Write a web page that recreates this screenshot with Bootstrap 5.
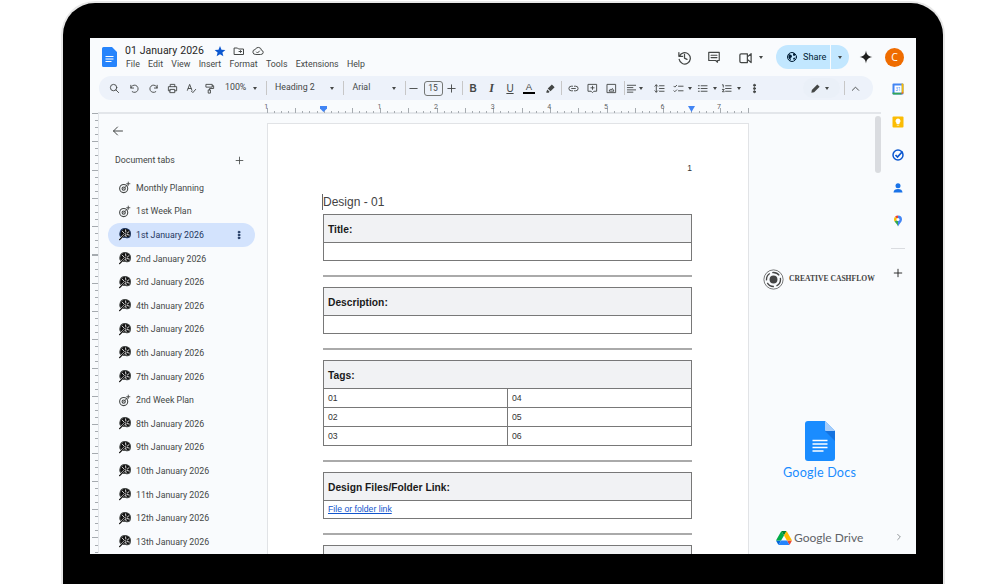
<!DOCTYPE html>
<html lang="en">
<head>
<meta charset="utf-8">
<title>01 January 2026</title>
<link href="https://cdn.jsdelivr.net/npm/bootstrap@5.3.0/dist/css/bootstrap.min.css" rel="stylesheet">
<style>
html,body{height:584px;overflow:hidden;background:#fff;font-family:Roboto,sans-serif;color:#444746}
.frame{width:884px;height:600px;margin:1px 0 0 61px;background:#000;border:2px solid #e8e8e8;border-bottom:0;border-radius:34px 34px 0 0;padding:35px 0 0 27px}
.screen{width:826px;height:516px;background:#f9fbfd;overflow:hidden}
.topbar{height:38px}
.docmark{margin:0 8px 0 12px;width:15px;height:20px;flex:none}
.titleblock{align-self:flex-start}
.doctitle{font-size:10.5px;line-height:14px;color:#1f1f1f;word-spacing:.4px;margin-right:10px}
.titlerow{height:14px;margin-top:6px}
.menus{font-size:8.8px;line-height:13px;gap:8.3px;color:#444746;margin-left:1px}
.ico{width:12px;height:12px;flex:none;fill:none;stroke:currentColor;stroke-width:2;stroke-linecap:round;stroke-linejoin:round}
.solid{fill:currentColor;stroke:none}
.titleicons{gap:7px}
.star{color:#0b57d0}
.hist{width:15px;height:15px;margin-right:15px}
.cmt{width:14px;height:14px;margin-right:17px}
.vid{width:15px;height:15px}
.caret{width:0;height:0;border:2.5px solid transparent;border-top:3px solid #444746;border-bottom:0;flex:none}
.vcaret{margin:0 13px 0 6px}
.sharebtn{width:73px;height:24px;background:#c2e7ff;border-radius:12px;color:#001d35;font-size:9.2px}
.sharemain{width:54px;padding-left:10px;gap:5px;height:100%}
.sharediv{width:1px;height:100%;background:#f9fbfd}
.sharecaret{flex:1;height:100%}
.spark{width:14px;height:14px;margin:0 12px 0 10px;color:#1f1f1f}
.avatar{width:19px;height:19px;border-radius:50%;background:#ef6c00;color:#fff;font-size:10.5px;font-weight:500;line-height:19px;text-align:center;font-family:"Open Sans",sans-serif}
.rightactions{margin-right:12px}
.lower{height:478px}
.leftcol{width:791px;flex:none}
.toolbar{width:774px;height:24px;margin-left:9px;background:#edf2fa;border-radius:12px;font-size:8.8px;color:#444746;padding-left:5px}
.tb{width:19px;height:24px;flex:none}
.tb21{width:21px}
.tb20{width:20px}
.tb18{width:18px}
.tb14{width:14px}
.tb .ico{width:11px;height:11px}
.sep{width:1px;height:14px;background:#c7c7c7;flex:none}
.g1{margin-left:1px}.g15{margin-left:1.5px}.g2{margin-left:2px}.g3{margin-left:3px}.g4{margin-left:4px}.g65{margin-left:6.5px}.g85{margin-left:8.5px}.g95{margin-left:9.5px}.g385{margin-left:38.5px}
.zoomtxt{width:30px;padding-left:7px;flex:none}
.styletxt{width:62.5px;flex:none;padding-left:8px}
.fonttxt{width:48px;flex:none;padding-left:8.5px}
.sizebox{width:19px;height:15px;border:1px solid #747775;border-radius:3px;font-size:8.5px;line-height:13px;text-align:center;flex:none}
.ltr{font-family:"Liberation Sans",sans-serif;font-size:10px}
.ltr-b{font-weight:700}
.ltr-i{font-family:"Liberation Serif",serif;font-style:italic;font-weight:700;font-size:12px}
.ltr-u{text-decoration:underline}
.colorA{flex-direction:column;line-height:9px;font-size:9.5px}
.colorA i{display:block;width:12px;height:2px;background:#000;margin-top:1px}
.editpill{width:37px;height:20px;border-radius:10px;gap:4.5px;padding-left:7px;background:#eaf0f8;flex:none}
.editpill .ico{width:11px;height:11px}
.rulerh{height:13px;position:relative;font-size:7px;line-height:8px;color:#5f6368}
.rulerstrip{position:absolute;left:177px;top:0;width:482px;height:13px;padding-top:3px;background:repeating-linear-gradient(90deg,#a6abb0 0 1px,transparent 1px 28.3px) 0 bottom/100% 5px no-repeat,repeating-linear-gradient(90deg,#a6abb0 0 1px,transparent 1px 7.075px) 0 bottom/100% 2px no-repeat}
.rulernum{width:56.6px;flex:none;text-align:center}
.r0{margin-left:-29px}
.r1{margin-left:56.6px}
.marker{position:absolute;top:6px;width:7px;height:6px;background:#4285f4;clip-path:polygon(0 0,100% 0,100% 40%,50% 100%,0 40%)}
.m1{left:230px}
.m2{left:598px;clip-path:polygon(0 0,100% 0,50% 100%)}
.workspace{height:441px}
.rulerv{width:8px;flex:none;height:100%;background:repeating-linear-gradient(180deg,#a6abb0 0 1px,transparent 1px 28.3px) right top/6px 100% no-repeat,repeating-linear-gradient(180deg,#a6abb0 0 1px,transparent 1px 7.075px) right top/3px 100% no-repeat}
.mainarea{border-top:2px solid #e3e6ea;border-left:1px solid #e3e6ea;height:100%;flex:1;min-width:0;margin-top:-1px}
.sidebar{width:168px;flex:none;color:#444746}
.backrow{height:32px;padding:1px 0 0 13px}
.backrow .ico{width:12px;height:12px}
.tabshead{height:30px;padding:0 0 0 16px;font-size:8.8px;color:#444746}
.tabshead .ico{width:9px;height:9px;margin-left:auto;margin-right:23px;margin-top:-2px}
.tabitem{height:23.6px;margin:0 12px 0 9px;padding:0 7px 0 10px;gap:5px;border-radius:12px;font-size:8.8px;line-height:12px}
.tabitem .ico{width:13px;height:13px}
.tabitem.sel{background:#d3e3fd;color:#1f3760}
.tabitem .dots{margin-left:auto;width:10px;height:10px;margin-right:4px}
.tabname{white-space:nowrap}
.docpage{width:482px;flex:none;margin-top:9px;height:600px;background:#fff;border:1px solid #e1e3e6;border-bottom:0;padding:39px 56px 0 55px;font-family:"Liberation Sans",sans-serif;color:#000}
.pagenum{text-align:right;font-size:8.5px;line-height:10px;color:#333;height:10px}
.heading{font-size:12px;line-height:16px;color:#434343;margin:21px 0 4px 0;height:16px;box-shadow:-1px 0 0 #666}
.doc-table{width:369px;margin:0;border-color:#787878;font-size:8.7px;table-layout:fixed;--bs-table-bg:transparent}
.doc-table td{border:1px solid #787878;padding:0 4px;vertical-align:middle;color:#333;line-height:11px}
.doc-table .head{background:#f1f2f4;height:28px;padding-top:1px;font-weight:700;font-size:10.25px;color:#1a1a1a}
.doc-table .cell{height:18px}
.doc-table .wide{height:19px}
.docrule{border:0;border-top:2px solid #aaa;opacity:1;margin:14px 0 10px;width:369px}
.doclink{color:#1155cc;text-decoration:underline}
.rightzone{width:124px;flex:none;height:100%;padding-left:14px}
.brandline{margin-top:154px;height:22px;gap:5px;font-family:"Liberation Serif",serif;font-weight:700;font-size:7.6px;color:#444;white-space:nowrap}
.brandline svg{width:21px;height:21px;flex:none}
.gdocs{margin-top:131px;margin-left:20px;width:73px}
.gdocs svg{width:30px;height:40px}
.gdocs div{font-family:Lato,sans-serif;font-size:12.6px;line-height:18px;color:#1a8cff;margin-top:3px;white-space:nowrap;letter-spacing:.2px}
.gdrive{margin-top:47px;margin-left:13px;gap:2px;font-family:Lato,sans-serif;font-size:12px;color:#5f6368;white-space:nowrap;height:18px}
.gdrive svg{width:16px;height:14px;flex:none}
.scrollgut{width:8px;flex:none;padding:2px 0 0 2px}
.thumb{width:6px;height:57px;background:#dadce0;border-radius:3px}
.sidepanel{width:35px;flex:none;padding-right:1px;margin-top:-4px}
.sp{height:33.2px;width:100%;flex:none}
.sp svg{width:12px;height:12px}
.sprule{width:14px;height:1px;background:#dadce0;margin:10px auto 0}
.spplus{margin-top:14px;height:20px}
.spplus svg{width:10px;height:10px;color:#1f1f1f}
.spnext{height:34px;margin-top:auto}
.spnext svg{width:8px;height:8px;color:#5f6368;margin-left:1px}
</style>
</head>
<body>
<svg width="0" height="0" class="position-absolute">
<defs>
<symbol id="i-target" viewBox="0 0 24 24"><circle cx="10.5" cy="14" r="7.5" fill="none" stroke="currentColor" stroke-width="2"/><circle cx="10.5" cy="14" r="3" fill="none" stroke="currentColor" stroke-width="2"/><path d="M10.5 14l7-7M19 2v6M16 5h6" fill="none" stroke="currentColor" stroke-width="1.6"/></symbol>
<symbol id="i-palette" viewBox="0 0 24 24"><path d="M13 1c6 0 10 4 10 9s-3 8-6 8c-2 0-2.500-1-4-1-3 0-3 1-5 .5C4.500 16.500 3 13.500 3.500 10 4.200 5 8 1 13 1z" fill="#111"/><path d="M8 6l3 3M14 3.500l.5 4M20 7l-3 2.500M20.500 13l-4-1M15 16l-1-3" stroke="#fff" stroke-width="1.600"/><path d="M13 11L4 20" stroke="#fff" stroke-width="3.500"/><path d="M13 11L3 21.500" stroke="#111" stroke-width="2.400" stroke-linecap="round"/></symbol>
<symbol id="i-plus" viewBox="0 0 24 24"><path d="M12 3v18M3 12h18" fill="none" stroke="currentColor" stroke-width="2.2"/></symbol>
<symbol id="i-dots" viewBox="0 0 24 24"><circle cx="12" cy="5" r="2.2" fill="currentColor"/><circle cx="12" cy="12" r="2.2" fill="currentColor"/><circle cx="12" cy="19" r="2.2" fill="currentColor"/></symbol>
</defs>
</svg>
<div class="frame">
 <div class="screen">
  <div class="topbar d-flex align-items-center">
   <svg class="docmark" viewBox="0 0 15 20"><path d="M1.500 0H10l5 5v13.500a1.500 1.500 0 0 1-1.500 1.500h-12A1.500 1.500 0 0 1 0 18.500v-17A1.500 1.500 0 0 1 1.500 0z" fill="#2684fc"/><path d="M3.500 9.500h8M3.500 12h8M3.500 14.500h6" stroke="#fff" stroke-width="1.100"/></svg>
   <div class="titleblock">
    <div class="titlerow d-flex align-items-center">
     <span class="doctitle">01 January 2026</span>
     <div class="titleicons d-flex align-items-center">
      <svg class="ico solid star" viewBox="0 0 24 24"><path d="M12 2l3 7.300 7.800.6-6 5 1.900 7.600L12 18.400l-6.700 4.100 1.900-7.600-6-5L9 9.300z"/></svg>
      <svg class="ico" viewBox="0 0 24 24"><path d="M3 6h6l2 2h10v11H3zM12 13h5M15 11l2 2-2 2"/></svg>
      <svg class="ico" viewBox="0 0 24 24"><path d="M7 19a5 5 0 0 1-.5-10A6.500 6.500 0 0 1 19 10.500 4.300 4.300 0 0 1 18 19zM9 14l2 2 4-4"/></svg>
     </div>
    </div>
    <div class="menus d-flex"><span>File</span><span>Edit</span><span>View</span><span>Insert</span><span>Format</span><span>Tools</span><span>Extensions</span><span>Help</span></div>
   </div>
   <div class="ms-auto d-flex align-items-center rightactions">
    <svg class="ico hist" viewBox="0 0 24 24"><path d="M3 4v6h6M4 10a9 9 0 1 1-.5 5M12 7v6l4 2"/></svg>
    <svg class="ico cmt" viewBox="0 0 24 24"><path d="M3 4h18v14h-3v3l-3-3H3zM7 9h10M7 13h10"/></svg>
    <svg class="ico vid" viewBox="0 0 24 24"><path d="M3 8a2 2 0 0 1 2-2h10v14H5a2 2 0 0 1-2-2zM15 11l6-5v14l-6-5"/></svg>
    <span class="caret vcaret"></span>
    <div class="sharebtn d-flex align-items-center">
     <div class="sharemain d-flex align-items-center"><svg class="ico" viewBox="0 0 24 24"><circle cx="12" cy="12" r="9"/><path d="M5 6l6 2 1 4-3 2 1 6-5-6zM14 4l5 3-2 3-3-1zM14 14l5-1-3 6z" fill="currentColor" stroke="none"/></svg><span>Share</span></div>
     <span class="sharediv"></span>
     <div class="sharecaret d-flex align-items-center justify-content-center"><span class="caret"></span></div>
    </div>
    <svg class="ico solid spark" viewBox="0 0 24 24"><path d="M12 1c1 7 4 10 11 11-7 1-10 4-11 11-1-7-4-10-11-11 7-1 10-4 11-11z"/></svg>
    <div class="avatar">C</div>
   </div>
  </div>
  <div class="lower d-flex">
   <div class="leftcol">
    <div class="toolbar d-flex align-items-center">
     <div class="tb tb21 d-flex align-items-center justify-content-center"><svg class="ico" viewBox="0 0 24 24"><circle cx="10" cy="10" r="7"/><path d="M15 15l6 6"/></svg></div>
     <div class="tb d-flex align-items-center justify-content-center"><svg class="ico" viewBox="0 0 24 24"><path d="M4 5v6h6M4 11a8 8 0 1 1 3 8"/></svg></div>
     <div class="tb d-flex align-items-center justify-content-center"><svg class="ico" viewBox="0 0 24 24"><path d="M20 5v6h-6M20 11a8 8 0 1 0-3 8"/></svg></div>
     <div class="tb d-flex align-items-center justify-content-center"><svg class="ico" viewBox="0 0 24 24"><path d="M7 8V3h10v5M7 17H3V8h18v9h-4M7 14h10v7H7z"/></svg></div>
     <div class="tb tb18 d-flex align-items-center justify-content-center"><svg class="ico" viewBox="0 0 24 24"><path d="M3 16L8 3l5 13M5 12h6M12 18l3 3 6-7"/></svg></div>
     <div class="tb tb18 d-flex align-items-center justify-content-center"><svg class="ico" viewBox="0 0 24 24"><path d="M5 3h13v6H5zM18 6h3v6h-9v3M10 15h4v7h-4z"/></svg></div>
     <span class="zoomtxt">100%</span><div class="tb tb14 d-flex align-items-center justify-content-center"><span class="caret"></span></div>
     <span class="sep g4"></span>
     <span class="styletxt">Heading 2</span><span class="caret"></span><span class="sep g95"></span>
     <span class="fonttxt">Arial</span><span class="caret"></span><span class="sep g85"></span>
     <div class="tb tb14 g1 d-flex align-items-center justify-content-center"><svg class="ico" viewBox="0 0 24 24"><path d="M4 12h16"/></svg></div>
     <span class="sizebox g3">15</span>
     <div class="tb tb14 g2 d-flex align-items-center justify-content-center"><svg class="ico" viewBox="0 0 24 24"><path d="M4 12h16M12 4v16"/></svg></div>
     <span class="sep g3"></span>
     <div class="tb g1 d-flex align-items-center justify-content-center ltr ltr-b">B</div>
     <div class="tb tb18 d-flex align-items-center justify-content-center ltr ltr-i">I</div>
     <div class="tb d-flex align-items-center justify-content-center ltr ltr-u">U</div>
     <div class="tb d-flex align-items-center justify-content-center ltr colorA"><span>A</span><i></i></div>
     <div class="tb tb20 g15 d-flex align-items-center justify-content-center"><svg class="ico solid" viewBox="0 0 24 24"><path d="M15 3l6 6-9 9-6-6zM5 14l5 5-2 2H3v-2z"/></svg></div>
     <span class="sep g1"></span>
     <div class="tb g15 d-flex align-items-center justify-content-center"><svg class="ico" viewBox="0 0 24 24"><path d="M10 7H7a5 5 0 0 0 0 10h3M14 7h3a5 5 0 0 1 0 10h-3M8 12h8"/></svg></div>
     <div class="tb d-flex align-items-center justify-content-center"><svg class="ico" viewBox="0 0 24 24"><path d="M3 3h18v15h-6l-3 3-3-3H3zM12 7v7M8.500 10.500h7"/></svg></div>
     <div class="tb d-flex align-items-center justify-content-center"><svg class="ico" viewBox="0 0 24 24"><path d="M3 3h18v18H3zM7 17l3-4 2 2 2-3 3 5z"/></svg></div>
     <span class="sep g3"></span>
     <div class="tb tb14 d-flex align-items-center justify-content-center"><svg class="ico" viewBox="0 0 24 24"><path d="M3 5h18M3 10h12M3 15h18M3 20h12"/></svg></div><span class="caret"></span>
     <div class="tb tb20 g65 d-flex align-items-center justify-content-center"><svg class="ico" viewBox="0 0 24 24"><path d="M5 4v16M2 7l3-3 3 3M2 17l3 3 3-3M12 6h10M12 12h10M12 18h10"/></svg></div>
     <div class="tb d-flex align-items-center justify-content-center"><svg class="ico" viewBox="0 0 24 24"><path d="M2 7l2 2 4-4M2 17l2 2 4-4M12 7h10M12 17h10"/></svg></div><span class="caret"></span>
     <div class="tb g1 d-flex align-items-center justify-content-center"><svg class="ico" viewBox="0 0 24 24"><path d="M9 6h13M9 12h13M9 18h13M3 6h2M3 12h2M3 18h2"/></svg></div><span class="caret g1"></span>
     <div class="tb d-flex align-items-center justify-content-center"><svg class="ico" viewBox="0 0 24 24"><path d="M10 6h12M10 12h12M10 18h12M3 4h2v5M3 14h4l-4 5h4"/></svg></div><span class="caret g1"></span>
     <div class="tb g4 d-flex align-items-center justify-content-center"><svg class="ico" viewBox="0 0 24 24"><use href="#i-dots"/></svg></div>
     <div class="editpill g385 d-flex align-items-center"><svg class="ico solid" viewBox="0 0 24 24"><path d="M3 21l1-6L16 3l5 5L9 20z"/></svg><span class="caret"></span></div>
     <span class="sep g4"></span>
     <div class="tb g15 d-flex align-items-center justify-content-center"><svg class="ico" viewBox="0 0 24 24"><path d="M5 16l7-7 7 7"/></svg></div>
    </div>
    <div class="rulerh">
     <div class="rulerstrip d-flex"><span class="rulernum r0">1</span><span class="rulernum r1">1</span><span class="rulernum">2</span><span class="rulernum">3</span><span class="rulernum">4</span><span class="rulernum">5</span><span class="rulernum">6</span><span class="rulernum">7</span></div>
     <span class="marker m1"></span><span class="marker m2"></span>
    </div>
    <div class="workspace d-flex">
     <div class="rulerv"></div>
     <div class="mainarea d-flex">
      <aside class="sidebar">
       <div class="backrow d-flex align-items-center"><svg class="ico" viewBox="0 0 24 24"><path d="M21 12H3M11 4l-8 8 8 8"/></svg></div>
       <div class="tabshead d-flex align-items-center"><span>Document tabs</span><svg class="ico" viewBox="0 0 24 24"><use href="#i-plus"/></svg></div>
       <div class="tabitem d-flex align-items-center"><svg class="ico" viewBox="0 0 24 24"><use href="#i-target"/></svg><span class="tabname">Monthly Planning</span></div>
       <div class="tabitem d-flex align-items-center"><svg class="ico" viewBox="0 0 24 24"><use href="#i-target"/></svg><span class="tabname">1st Week Plan</span></div>
       <div class="tabitem sel d-flex align-items-center"><svg class="ico" viewBox="0 0 24 24"><use href="#i-palette"/></svg><span class="tabname">1st January 2026</span><svg class="ico dots" viewBox="0 0 24 24"><use href="#i-dots"/></svg></div>
       <div class="tabitem d-flex align-items-center"><svg class="ico" viewBox="0 0 24 24"><use href="#i-palette"/></svg><span class="tabname">2nd January 2026</span></div>
       <div class="tabitem d-flex align-items-center"><svg class="ico" viewBox="0 0 24 24"><use href="#i-palette"/></svg><span class="tabname">3rd January 2026</span></div>
       <div class="tabitem d-flex align-items-center"><svg class="ico" viewBox="0 0 24 24"><use href="#i-palette"/></svg><span class="tabname">4th January 2026</span></div>
       <div class="tabitem d-flex align-items-center"><svg class="ico" viewBox="0 0 24 24"><use href="#i-palette"/></svg><span class="tabname">5th January 2026</span></div>
       <div class="tabitem d-flex align-items-center"><svg class="ico" viewBox="0 0 24 24"><use href="#i-palette"/></svg><span class="tabname">6th January 2026</span></div>
       <div class="tabitem d-flex align-items-center"><svg class="ico" viewBox="0 0 24 24"><use href="#i-palette"/></svg><span class="tabname">7th January 2026</span></div>
       <div class="tabitem d-flex align-items-center"><svg class="ico" viewBox="0 0 24 24"><use href="#i-target"/></svg><span class="tabname">2nd Week Plan</span></div>
       <div class="tabitem d-flex align-items-center"><svg class="ico" viewBox="0 0 24 24"><use href="#i-palette"/></svg><span class="tabname">8th January 2026</span></div>
       <div class="tabitem d-flex align-items-center"><svg class="ico" viewBox="0 0 24 24"><use href="#i-palette"/></svg><span class="tabname">9th January 2026</span></div>
       <div class="tabitem d-flex align-items-center"><svg class="ico" viewBox="0 0 24 24"><use href="#i-palette"/></svg><span class="tabname">10th January 2026</span></div>
       <div class="tabitem d-flex align-items-center"><svg class="ico" viewBox="0 0 24 24"><use href="#i-palette"/></svg><span class="tabname">11th January 2026</span></div>
       <div class="tabitem d-flex align-items-center"><svg class="ico" viewBox="0 0 24 24"><use href="#i-palette"/></svg><span class="tabname">12th January 2026</span></div>
       <div class="tabitem d-flex align-items-center"><svg class="ico" viewBox="0 0 24 24"><use href="#i-palette"/></svg><span class="tabname">13th January 2026</span></div>
      </aside>
      <main class="docpage">
       <div class="pagenum">1</div>
       <div class="heading">Design - 01</div>
       <table class="table doc-table"><tbody><tr><td class="head">Title:</td></tr><tr><td class="cell"></td></tr></tbody></table>
       <hr class="docrule">
       <table class="table doc-table"><tbody><tr><td class="head">Description:</td></tr><tr><td class="cell"></td></tr></tbody></table>
       <hr class="docrule">
       <table class="table doc-table"><tbody><tr><td class="head" colspan="2">Tags:</td></tr><tr><td class="wide">01</td><td class="wide">04</td></tr><tr><td class="wide">02</td><td class="wide">05</td></tr><tr><td class="wide">03</td><td class="wide">06</td></tr></tbody></table>
       <hr class="docrule">
       <table class="table doc-table"><tbody><tr><td class="head">Design Files/Folder Link:</td></tr><tr><td class="cell"><a class="doclink" href="#">File or folder link</a></td></tr></tbody></table>
       <hr class="docrule">
       <table class="table doc-table"><tbody><tr><td class="head"></td></tr></tbody></table>
      </main>
      <div class="rightzone">
       <div class="brandline d-flex align-items-center"><svg viewBox="0 0 24 24"><circle cx="12" cy="12" r="11" fill="none" stroke="#666" stroke-width="1"/><circle cx="12" cy="12" r="8" fill="none" stroke="#444" stroke-width="1.500" stroke-dasharray="9 3"/><circle cx="12" cy="12" r="4.500" fill="#444"/></svg><span>CREATIVE CASHFLOW</span></div>
       <div class="gdocs text-center"><svg viewBox="0 0 30 40"><path d="M3 0h17l10 10v27a3 3 0 0 1-3 3H3a3 3 0 0 1-3-3V3a3 3 0 0 1 3-3z" fill="#1a8cff"/><path d="M20 0l10 10H21a1 1 0 0 1-1-1z" fill="#a6cdfb"/><path d="M20 10l10 10V10z" fill="#1473e0"/><path d="M7.500 19.500h15M7.500 23h15M7.500 26.500h15M7.500 30h11" stroke="#fff" stroke-width="1.700"/></svg><div>Google Docs</div></div>
       <div class="gdrive d-flex align-items-center"><svg viewBox="0 0 87.300 78"><path d="m6.600 66.850 3.850 6.650c.8 1.400 1.950 2.500 3.300 3.300l13.750-23.800h-27.500c0 1.550.4 3.100 1.200 4.500z" fill="#0066da"/><path d="m43.650 25-13.750-23.800c-1.350.8-2.500 1.900-3.300 3.300l-25.400 44a9.060 9.060 0 0 0 -1.200 4.500h27.500z" fill="#00ac47"/><path d="m73.550 76.800c1.350-.8 2.500-1.900 3.300-3.300l1.600-2.750 7.650-13.250c.8-1.400 1.200-2.950 1.200-4.500h-27.502l5.852 11.500z" fill="#ea4335"/><path d="m43.650 25 13.750-23.800c-1.350-.8-2.900-1.200-4.500-1.200h-18.500c-1.600 0-3.150.45-4.500 1.200z" fill="#00832d"/><path d="m59.800 53h-32.300l-13.750 23.800c1.350.8 2.900 1.200 4.500 1.200h50.800c1.600 0 3.150-.45 4.500-1.200z" fill="#2684fc"/><path d="m73.400 26.500-12.700-22c-.8-1.400-1.950-2.500-3.300-3.300l-13.750 23.800 16.150 28h27.450c0-1.550-.4-3.100-1.200-4.500z" fill="#ffba00"/></svg><span>Google Drive</span></div>
      </div>
      <div class="scrollgut"><div class="thumb"></div></div>
     </div>
    </div>
   </div>
   <div class="sidepanel d-flex flex-column">
    <div class="sp d-flex align-items-center justify-content-center"><svg viewBox="0 0 24 24"><rect x="1" y="1" width="22" height="22" rx="2" fill="#4285f4"/><path d="M19 1h2a2 2 0 0 1 2 2v18h-4z" fill="#fbbc04"/><path d="M1 19h18v4H3a2 2 0 0 1-2-2z" fill="#34a853"/><path d="M19 19h4l-4 4z" fill="#ea4335"/><rect x="5" y="5" width="14" height="14" fill="#fff"/><text x="12" y="16" font-size="9" text-anchor="middle" fill="#4285f4">31</text></svg></div>
    <div class="sp d-flex align-items-center justify-content-center"><svg viewBox="0 0 24 24"><rect x="1" y="1" width="22" height="22" rx="2" fill="#fbbc04"/><path d="M12 5a5 5 0 0 0-3 9v2h6v-2a5 5 0 0 0-3-9zM9.500 17.500h5V19h-5z" fill="#fff"/></svg></div>
    <div class="sp d-flex align-items-center justify-content-center"><svg viewBox="0 0 24 24"><circle cx="12" cy="12" r="10" fill="none" stroke="#0b57d0" stroke-width="3"/><path d="M7 12l4 4 10-11" fill="none" stroke="#0b57d0" stroke-width="3.500"/></svg></div>
    <div class="sp d-flex align-items-center justify-content-center"><svg viewBox="0 0 24 24"><circle cx="12" cy="7.500" r="5" fill="#1a73e8"/><path d="M3 21c0-5 4-7 9-7s9 2 9 7z" fill="#1a73e8"/></svg></div>
    <div class="sp d-flex align-items-center justify-content-center"><svg viewBox="0 0 24 24"><path d="M12 1a8 8 0 0 1 8 8c0 5-5 8-8 14z" fill="#4285f4"/><path d="M12 1a8 8 0 0 0-6 2.700l6 6z" fill="#ea4335"/><path d="M6 3.700A8 8 0 0 0 4 9c0 1.500.4 2.700 1 3.800l7-3.100z" fill="#fbbc04"/><path d="M5 12.800C7 16 11 18 12 23V9.700z" fill="#34a853"/><circle cx="12" cy="9" r="3" fill="#fff"/></svg></div>
    <div class="sprule"></div>
    <div class="spplus d-flex align-items-center justify-content-center"><svg class="ico" viewBox="0 0 24 24"><use href="#i-plus"/></svg></div>
    <div class="spnext d-flex align-items-center justify-content-center"><svg class="ico" viewBox="0 0 24 24"><path d="M8 4l8 8-8 8"/></svg></div>
   </div>
  </div>
 </div>
</div>
</body>
</html>
